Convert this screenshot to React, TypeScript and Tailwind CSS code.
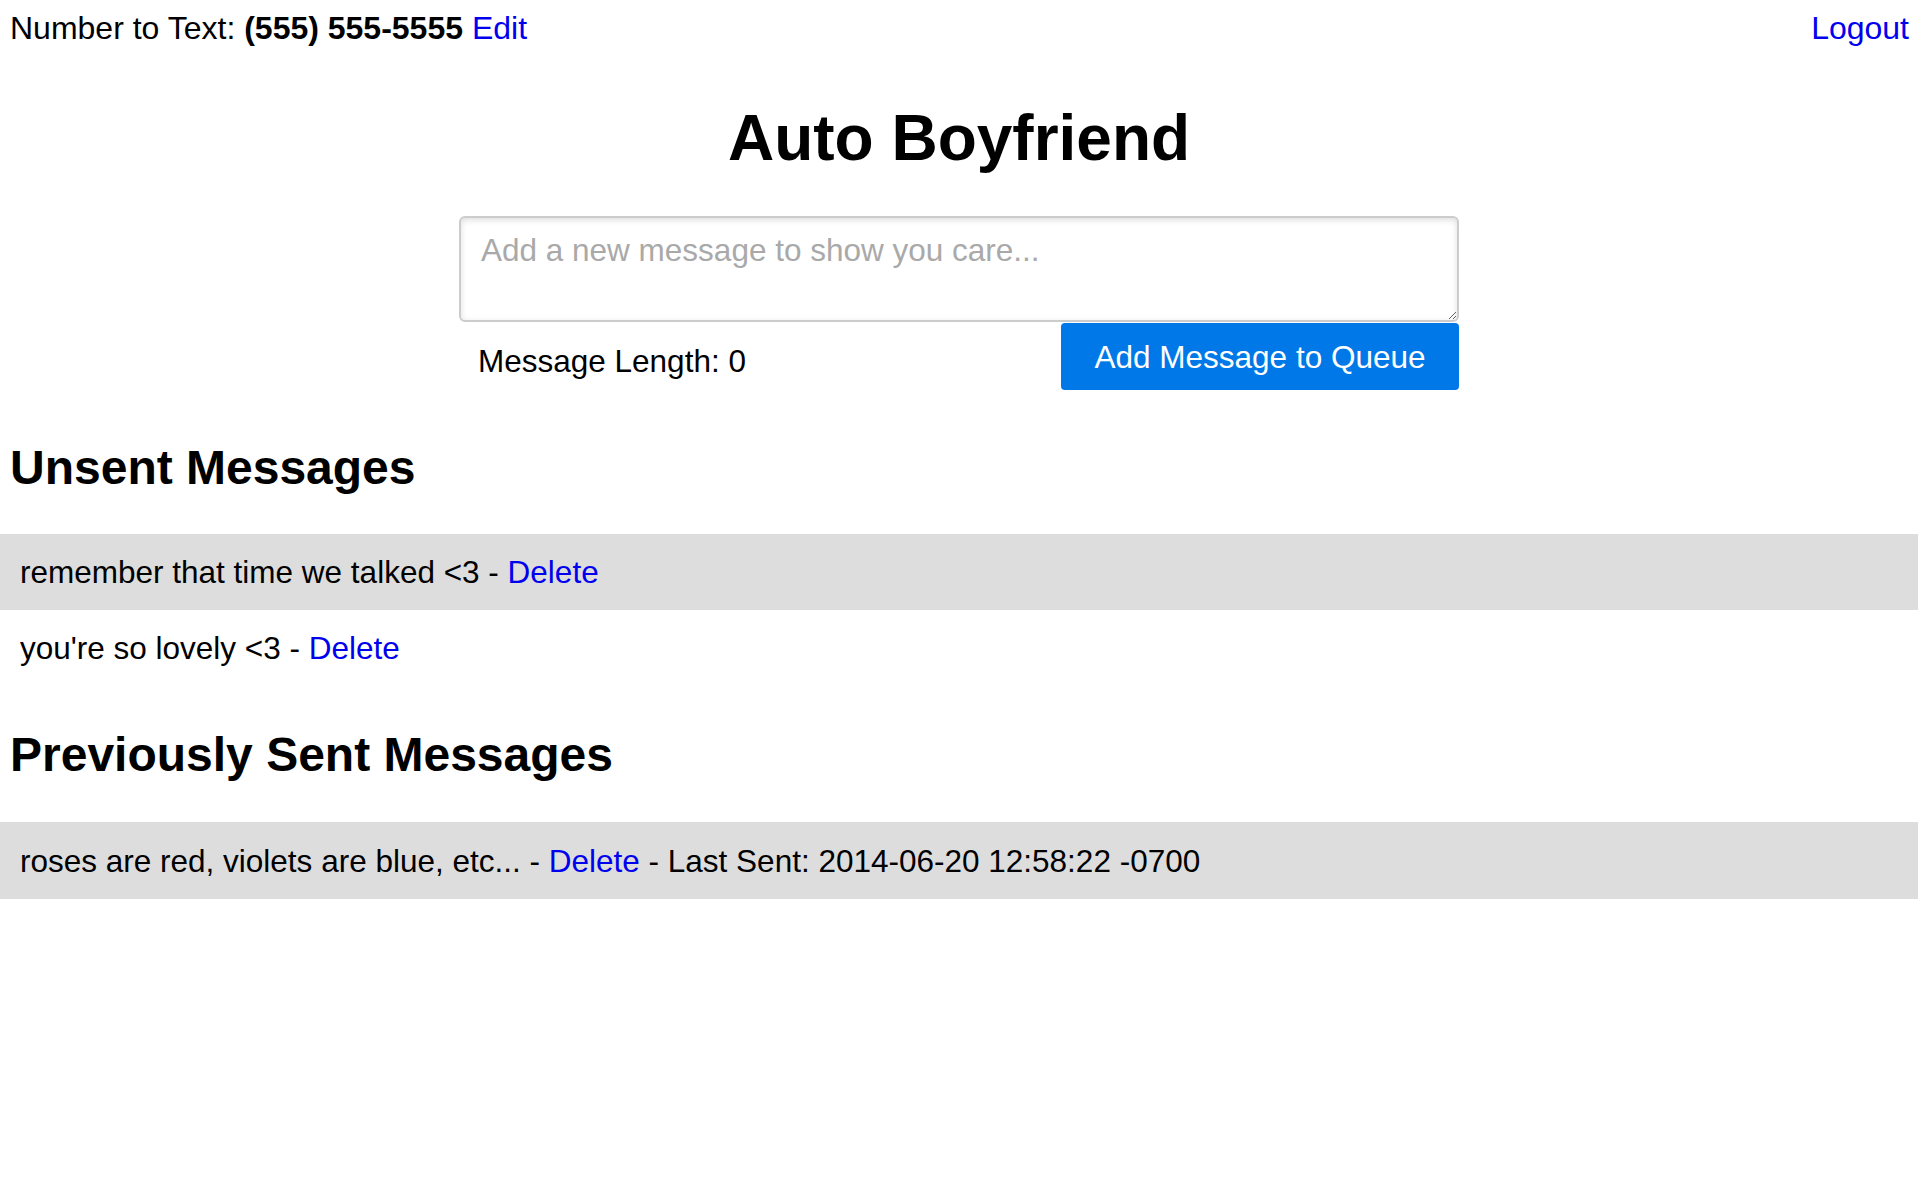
import { useState } from 'react';

const unsent = ['remember that time we talked <3', "you're so lovely <3"];
const sent = [{ text: 'roses are red, violets are blue, etc...', last: '2014-06-20 12:58:22 -0700' }];

export default function App() {
  const [msg, setMsg] = useState('');

  return (
    <div className="min-h-screen bg-white text-black text-[31.5px] leading-[36px]" style={{ fontFamily: '"Liberation Sans", Arial, sans-serif' }}>
      {/* Top bar */}
      <div className="flex justify-between items-start pl-[10px] pr-[9px] pt-[10px] text-[32px]">
        <div>
          Number to Text: <span className="font-bold">(555) 555-5555</span>{' '}
          <a href="#" className="text-[#0000ee]">Edit</a>
        </div>
        <a href="#" className="text-[#0000ee]">Logout</a>
      </div>

      {/* Title */}
      <h1 className="mt-[56px] text-center font-bold text-[64px] leading-[72px]">Auto Boyfriend</h1>

      {/* Form */}
      <div className="w-[1000px] mx-auto mt-[42px]">
        <textarea
          value={msg}
          onChange={(e) => setMsg(e.target.value)}
          placeholder="Add a new message to show you care..."
          className="block w-full h-[106px] border-2 border-[#cccccc] rounded-[6px] shadow-[inset_0_2px_6px_#dddddd] px-[20px] py-[14px] text-[31.5px] leading-[36px] outline-none placeholder:text-[#a9a9a9]"
        />
        <div className="flex justify-between items-start">
          <div className="pl-[19px] pt-[21px]">Message Length: {msg.length}</div>
          <button className="w-[398px] h-[67px] mt-px bg-[#0078e7] text-white rounded-[4px]">
            Add Message to Queue
          </button>
        </div>
      </div>

      {/* Unsent */}
      <h2 className="mt-[51px] pl-[10px] font-bold text-[48px] leading-[54px]">Unsent Messages</h2>
      <div className="mt-[39px]">
        {unsent.map((m, i) => (
          <div key={m} className={`h-[76px] flex items-center px-[20px] ${i % 2 === 0 ? 'bg-[#dddddd]' : ''}`}>
            <span>
              {m} - <a href="#" className="text-[#0000ee]">Delete</a>
            </span>
          </div>
        ))}
      </div>

      {/* Sent */}
      <h2 className="mt-[42px] pl-[10px] font-bold text-[48px] leading-[54px]">Previously Sent Messages</h2>
      <div className="mt-[40px]">
        {sent.map((m, i) => (
          <div key={m.text} className={`h-[77px] flex items-center px-[20px] ${i % 2 === 0 ? 'bg-[#dddddd]' : ''}`}>
            <span>
              {m.text} - <a href="#" className="text-[#0000ee]">Delete</a> - Last Sent: {m.last}
            </span>
          </div>
        ))}
      </div>
    </div>
  );
}
